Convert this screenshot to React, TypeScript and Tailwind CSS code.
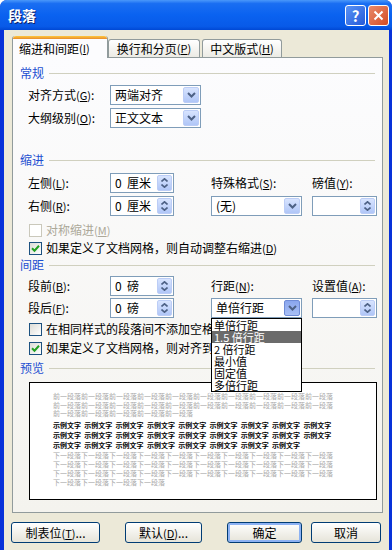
import React from "react";

const Acc = ({ k }: { k: string }) => (
  <span className="text-[11px]">
    (<span className="underline">{k}</span>)
  </span>
);

function Chevron() {
  return (
    <svg width="9" height="6" viewBox="0 0 9 6">
      <path d="M1 1l3.5 3.5L8 1" fill="none" stroke="#4d6185" strokeWidth="2" />
    </svg>
  );
}

function DropBtn({ pressed }: { pressed?: boolean }) {
  return (
    <div
      className={`my-[1px] mr-[1px] flex w-[16px] items-center justify-center rounded-[2px] border ${
        pressed
          ? "border-[#6f8bd6] bg-linear-to-b from-[#8aa6ee] to-[#a8bff5]"
          : "border-[#bccdf6] bg-linear-to-b from-[#d8e4fe] to-[#b0c6f7]"
      }`}
    >
      <Chevron />
    </div>
  );
}

function Combo({ value, className = "", pressed }: { value: string; className?: string; pressed?: boolean }) {
  return (
    <div className={`flex h-[20px] border border-[#7f9db9] bg-white ${className}`}>
      <div className="flex-1 truncate pl-[4px] text-[12px] leading-[18px]">{value}</div>
      <DropBtn pressed={pressed} />
    </div>
  );
}

function Spin({ value, className = "" }: { value: string; className?: string }) {
  return (
    <div className={`flex h-[20px] border border-[#7f9db9] bg-white ${className}`}>
      <div className="flex-1 whitespace-pre pl-[4px] text-[12px] leading-[18px]">{value}</div>
      <div className="my-[1px] mr-[1px] flex w-[15px] flex-col items-center justify-center gap-[2px] rounded-[2px] border border-[#bccdf6] bg-linear-to-b from-[#d8e4fe] to-[#b0c6f7]">
        <svg width="7" height="4" viewBox="0 0 7 4">
          <path d="M0.5 3.5L3.5 0.8L6.5 3.5" fill="none" stroke="#4d6185" strokeWidth="1.6" />
        </svg>
        <svg width="7" height="4" viewBox="0 0 7 4">
          <path d="M0.5 0.5L3.5 3.2L6.5 0.5" fill="none" stroke="#4d6185" strokeWidth="1.6" />
        </svg>
      </div>
    </div>
  );
}

function Check({
  checked,
  disabled,
  children,
  className = "",
}: {
  checked?: boolean;
  disabled?: boolean;
  children: React.ReactNode;
  className?: string;
}) {
  return (
    <div className={`flex h-[14px] items-center pl-[16px] ${className}`}>
      <div
        className={`flex h-[13px] w-[13px] shrink-0 items-center justify-center border ${
          disabled ? "border-[#cac8bb] bg-white" : "border-[#1c5180] bg-linear-to-br from-[#dcdcd6] to-white"
        }`}
      >
        {checked && (
          <svg width="9" height="9" viewBox="0 0 9 9">
            <path d="M1 4.2l2.5 2.5L8 1.8" fill="none" stroke="#21a121" strokeWidth="2" />
          </svg>
        )}
      </div>
      <span className={`ml-[4px] whitespace-nowrap text-[12px] leading-none ${disabled ? "text-[#aca899]" : "text-black"}`}>
        {children}
      </span>
    </div>
  );
}

function Section({ title, className = "" }: { title: string; className?: string }) {
  return (
    <div className={`flex h-[14px] items-center pl-[7px] pr-[7px] ${className}`}>
      <span className="text-[12px] leading-none text-[#1d4fd1]">{title}</span>
      <div className="ml-[5px] h-px flex-1 bg-[#d0d0bf]" />
    </div>
  );
}

function Btn({ children, className = "", def }: { children: React.ReactNode; className?: string; def?: boolean }) {
  return (
    <button
      className={`h-[21px] rounded-[3px] border border-[#003c74] bg-linear-to-b from-white to-[#e6e4d9] text-[12px] leading-none text-black ${
        def ? "shadow-[inset_0_0_0_2px_#8db2f3]" : ""
      } ${className}`}
    >
      {children}
    </button>
  );
}

const rep = (s: string, n: number) => Array.from({ length: n }, () => s).join("");

export default function App() {
  const listItems = ["单倍行距", "1.5 倍行距", "2 倍行距", "最小值", "固定值", "多倍行距"];
  return (
    <div className="flex h-[550px] w-[392px] flex-col overflow-hidden rounded-t-[7px] bg-linear-to-r from-[#0831d9] via-[#166aee] to-[#0831d9] font-['Noto_Sans_CJK_SC',sans-serif] text-black">
      {/* Title bar */}
      <div className="flex h-[30px] shrink-0 items-center bg-[linear-gradient(180deg,#4a98fa_0%,#1a6ef2_12%,#0a62f0_50%,#085ae8_88%,#0048d4_100%)] pl-[8px] pr-[3px]">
        <span className="text-[14px] font-bold text-white [text-shadow:1px_1px_0_#0a1f6a]">段落</span>
        <div className="ml-auto flex gap-[2px]">
          <div className="flex h-[21px] w-[21px] items-center justify-center rounded-[3px] border border-white bg-linear-to-br from-[#5b93f5] to-[#2459d8] text-[15px] font-bold leading-none text-white">
            ?
          </div>
          <div className="flex h-[21px] w-[21px] items-center justify-center rounded-[3px] border border-white bg-linear-to-br from-[#e88a6a] to-[#d44a1f]">
            <svg width="11" height="11" viewBox="0 0 11 11">
              <path d="M1.5 1.5l8 8M9.5 1.5l-8 8" stroke="white" strokeWidth="2" />
            </svg>
          </div>
        </div>
      </div>

      {/* Body */}
      <div className="ml-[4px] mr-[3px] flex flex-1 flex-col bg-[#ece9d8]">
        {/* Tabs */}
        <div className="mt-[6px] flex h-[22px] items-end pl-[8px]">
          <div className="relative z-10 flex h-[22px] w-[96px] flex-col rounded-t-[3px] border-x border-[#919b9c] bg-[#fcfcfe]">
            <div className="h-[3px] rounded-t-[3px] bg-linear-to-b from-[#ffc83c] to-[#e68b2c]" />
            <div className="flex flex-1 items-center pl-[6px] text-[12px]">
              缩进和间距<Acc k="I" />
            </div>
          </div>
          <div className="mb-[1px] flex h-[18px] w-[92px] items-center justify-center rounded-t-[3px] border border-b-0 border-[#919b9c] bg-linear-to-b from-white to-[#ecebe5] text-[12px]">
            换行和分页<Acc k="P" />
          </div>
          <div className="mb-[1px] ml-[2px] flex h-[18px] w-[80px] items-center justify-center rounded-t-[3px] border border-b-0 border-[#919b9c] bg-linear-to-b from-white to-[#ecebe5] text-[12px]">
            中文版式<Acc k="H" />
          </div>
        </div>

        {/* Panel */}
        <div className="relative -mt-[1px] ml-[8px] flex h-[456px] w-[371px] flex-col border border-[#919b9c] bg-linear-to-b from-[#fcfcfe] to-[#f4f3ee]">
          <Section title="常规" className="mt-[8px]" />
          <div className="mt-[5px] grid h-[20px] grid-cols-[82px_101px] items-center pl-[15px] text-[12px]">
            <span>
              对齐方式<Acc k="G" />:
            </span>
            <Combo value="两端对齐" className="w-[91px]" />
          </div>
          <div className="mt-[3px] grid h-[20px] grid-cols-[82px_101px] items-center pl-[15px] text-[12px]">
            <span>
              大纲级别<Acc k="O" />:
            </span>
            <Combo value="正文文本" className="w-[91px]" />
          </div>

          <Section title="缩进" className="mt-[25px]" />
          <div className="mt-[6px] grid h-[20px] grid-cols-[82px_101px_101px_65px] items-center pl-[15px] text-[12px]">
            <span>
              左侧<Acc k="L" />:
            </span>
            <Spin value="0  厘米" className="w-[64px]" />
            <span>
              特殊格式<Acc k="S" />:
            </span>
            <span>
              磅值<Acc k="Y" />:
            </span>
          </div>
          <div className="mt-[3px] grid h-[20px] grid-cols-[82px_101px_101px_65px] items-center pl-[15px] text-[12px]">
            <span>
              右侧<Acc k="R" />:
            </span>
            <Spin value="0  厘米" className="w-[64px]" />
            <Combo value="(无)" className="w-[91px]" />
            <Spin value="" className="w-[65px]" />
          </div>
          <Check disabled className="mt-[7px]">
            对称缩进<Acc k="M" />
          </Check>
          <Check checked className="mt-[4px]">
            如果定义了文档网格，则自动调整右缩进<Acc k="D" />
          </Check>

          <Section title="间距" className="mt-[3px]" />
          <div className="mt-[4px] grid h-[20px] grid-cols-[82px_101px_101px_65px] items-center pl-[15px] text-[12px]">
            <span>
              段前<Acc k="B" />:
            </span>
            <Spin value="0  磅" className="w-[64px]" />
            <span>
              行距<Acc k="N" />:
            </span>
            <span>
              设置值<Acc k="A" />:
            </span>
          </div>
          <div className="mt-[2px] grid h-[20px] grid-cols-[82px_101px_101px_65px] items-center pl-[15px] text-[12px]">
            <span>
              段后<Acc k="F" />:
            </span>
            <Spin value="0  磅" className="w-[64px]" />
            <div className="relative z-20">
              <Combo value="单倍行距" className="w-[91px]" pressed />
              {/* open dropdown list */}
              <div className="absolute left-0 top-[20px] w-[91px] border border-black bg-white">
                {listItems.map((it, i) => (
                  <div
                    key={it}
                    className={`flex h-[12px] items-center whitespace-nowrap pl-[2px] text-[11px] leading-[11px] ${
                      i === 1 ? "bg-[#6b6b6b] text-white" : "text-black"
                    }`}
                  >
                    {it}
                  </div>
                ))}
              </div>
            </div>
            <Spin value="" className="w-[65px]" />
          </div>
          <Check className="mt-[4px]">
            在相同样式的段落间不添加空格<Acc k="C" />
          </Check>
          <Check checked className="mt-[5px]">
            如果定义了文档网格，则对齐到网格<Acc k="W" />
          </Check>

          <Section title="预览" className="mt-[6px]" />
          <div className="mt-[7px] ml-[16px] h-[118px] w-[348px] border border-black bg-white pl-[23px] pt-[9px] text-[7px]">
            <div className="leading-[8.5px] text-[#a8a8a8]">
              <div>{rep("前一段落", 10)}</div>
              <div>{rep("前一段落", 10)}</div>
              <div>{rep("前一段落", 5)}</div>
            </div>
            <div className="mt-[2px] font-bold leading-[10px] text-black">
              {[9, 9, 8].map((n, r) => (
                <div key={r} className="flex gap-x-[3.3px] whitespace-nowrap">
                  {Array.from({ length: n }, (_, i) => (
                    <span key={i} className="inline-block w-[28px]">
                      示例文字
                    </span>
                  ))}
                </div>
              ))}
            </div>
            <div className="mt-[1px] leading-[9px] text-[#a8a8a8]">
              <div>{rep("下一段落", 10)}</div>
              <div>{rep("下一段落", 10)}</div>
              <div>{rep("下一段落", 10)}</div>
              <div>{rep("下一段落", 4)}</div>
            </div>
          </div>
        </div>

        {/* Buttons */}
        <div className="mt-[9px] flex pl-[7px]">
          <Btn className="w-[89px]">
            制表位<Acc k="T" />...
          </Btn>
          <Btn className="ml-[25px] w-[77px]">
            默认<Acc k="D" />...
          </Btn>
          <Btn def className="ml-[25px] w-[75px]">
            确定
          </Btn>
          <Btn className="ml-[9px] w-[70px]">取消</Btn>
        </div>
      </div>
    </div>
  );
}
